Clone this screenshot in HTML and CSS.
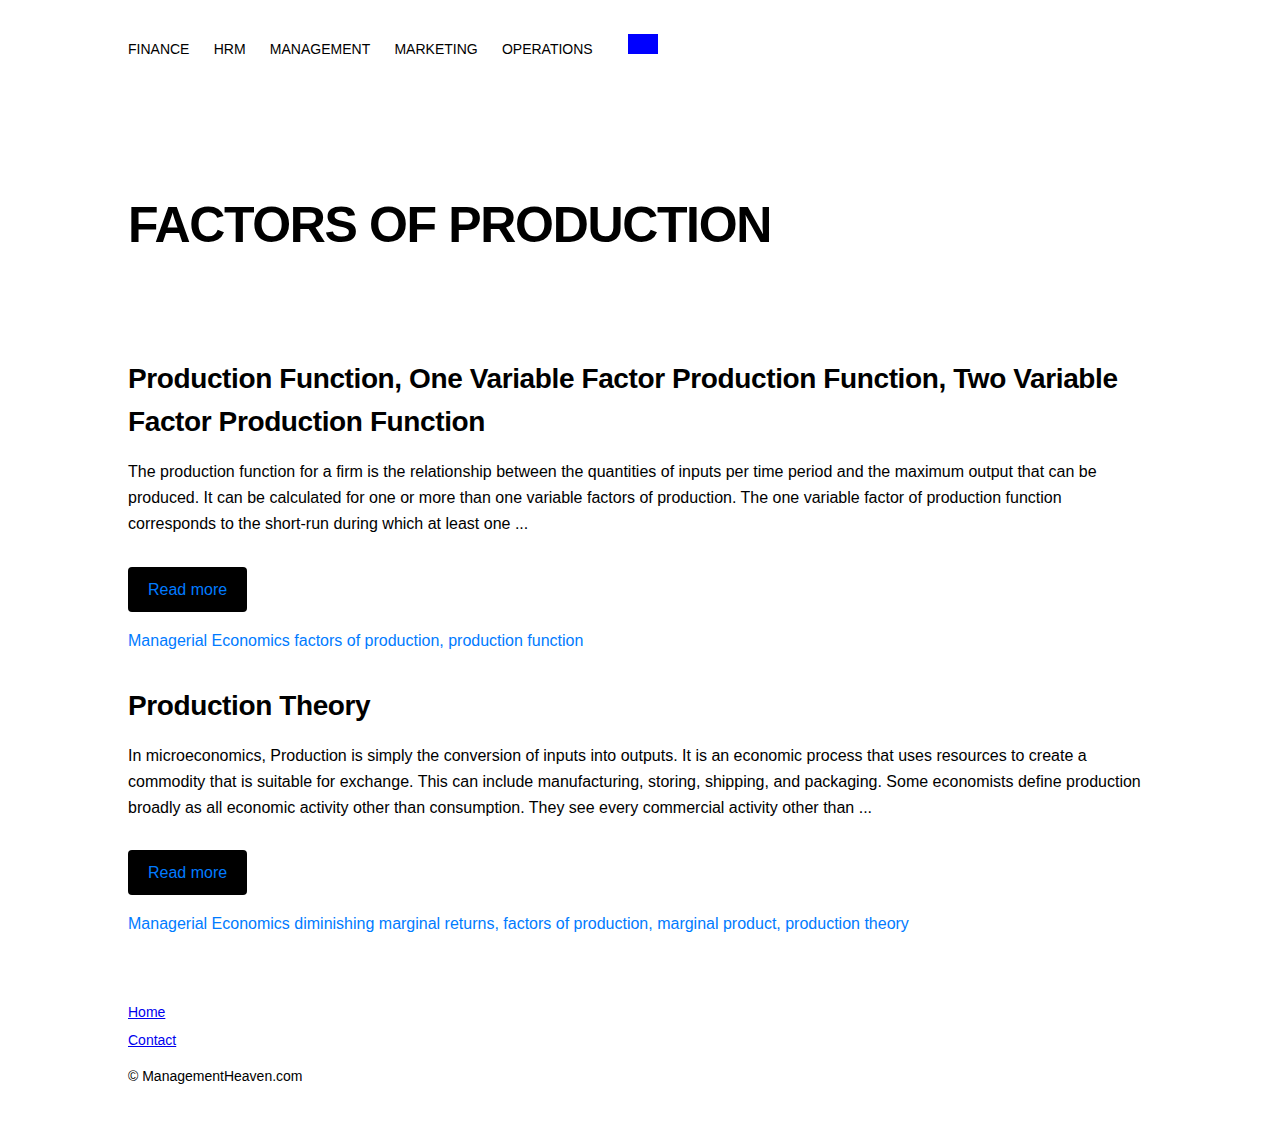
FILE: index.html
```html
<!DOCTYPE html>
<html lang="en">
<head>
<meta charset="utf-8">
<title>Factors of Production</title>
<link rel="stylesheet" href="styles.css">
</head>
<body>
<div class="container">
  <header class="site-header">
    <ul class="nav">
      <li><a href="#">FINANCE</a></li>
      <li><a href="#">HRM</a></li>
      <li><a href="#">MANAGEMENT</a></li>
      <li><a href="#">MARKETING</a></li>
      <li><a href="#">OPERATIONS</a></li>
    </ul>
    <span class="nav-box"></span>
  </header>

  <h1 class="page-title">FACTORS OF PRODUCTION</h1>

  <main class="posts">
    <article class="post">
      <h2 class="post-title">Production Function, One Variable Factor Production Function, Two Variable Factor Production Function</h2>
      <p class="post-excerpt">The production function for a firm is the relationship between the quantities of inputs per time period and the maximum output that can be produced. It can be calculated for one or more than one variable factors of production. The one variable factor of production function corresponds to the short-run during which at least one ...</p>
      <a class="read-more" href="#">Read more</a>
      <div class="post-meta"><a href="#">Managerial Economics</a> <a href="#">factors of production</a>, <a href="#">production function</a></div>
    </article>
    <article class="post">
      <h2 class="post-title">Production Theory</h2>
      <p class="post-excerpt">In microeconomics, Production is simply the conversion of inputs into outputs. It is an economic process that uses resources to create a commodity that is suitable for exchange. This can include manufacturing, storing, shipping, and packaging. Some economists define production broadly as all economic activity other than consumption. They see every commercial activity other than ...</p>
      <a class="read-more" href="#">Read more</a>
      <div class="post-meta"><a href="#">Managerial Economics</a> <a href="#">diminishing marginal returns</a>, <a href="#">factors of production</a>, <a href="#">marginal product</a>, <a href="#">production theory</a></div>
    </article>
  </main>

  <footer class="site-footer">
    <ul class="footer-links">
      <li><a href="#">Home</a></li>
      <li><a href="#">Contact</a></li>
    </ul>
    <p class="copyright">© ManagementHeaven.com</p>
  </footer>
</div>
</body>
</html>
```
FILE: styles.css
```css
html, body {
  margin: 0;
  padding: 0;
  background: #fff;
}
body {
  font-family: "Liberation Sans", Arial, sans-serif;
  color: #000;
}
.container {
  width: 1024px;
  margin: 0 auto;
}
.site-header {
  display: flex;
  align-items: flex-start;
  padding-top: 34px;
}
.nav {
  list-style: none;
  margin: 7px 0 0;
  padding: 0;
  display: flex;
  gap: 24.25px;
  font-size: 14px;
  line-height: 16px;
}
.nav a {
  color: #000;
  text-decoration: none;
}
.nav-box {
  display: block;
  width: 30px;
  height: 20px;
  background: #0000ff;
  margin-left: 35px;
}
.page-title {
  font-size: 50px;
  line-height: 67px;
  letter-spacing: -1.35px;
  font-weight: bold;
  margin: 135px 0 0;
}
.posts {
  margin-top: 98px;
}
.post + .post {
  margin-top: 30px;
}
.post-title {
  font-size: 28px;
  line-height: 43px;
  letter-spacing: -0.39px;
  font-weight: bold;
  margin: 0;
}
.post-excerpt {
  font-size: 16px;
  line-height: 26px;
  margin: 16px 0 30px;
}
.post + .post .post-excerpt {
  margin-bottom: 29px;
}
.read-more {
  display: inline-block;
  background: #000;
  color: #007bff;
  text-decoration: none;
  font-size: 16px;
  line-height: 21px;
  padding: 12px 20px;
  border-radius: 4px;
}
.post-meta {
  margin-top: 16px;
  font-size: 16px;
  line-height: 26px;
  color: #007bff;
}
.post-meta a {
  color: #007bff;
  text-decoration: none;
}
.site-footer {
  margin-top: 61px;
  padding-bottom: 30px;
  font-size: 14px;
}
.footer-links {
  list-style: none;
  margin: 0;
  padding: 0;
  line-height: 28px;
}
.footer-links a {
  color: #0000ee;
  text-decoration: underline;
}
.copyright {
  margin: 8px 0 0;
  line-height: 28px;
}
```
